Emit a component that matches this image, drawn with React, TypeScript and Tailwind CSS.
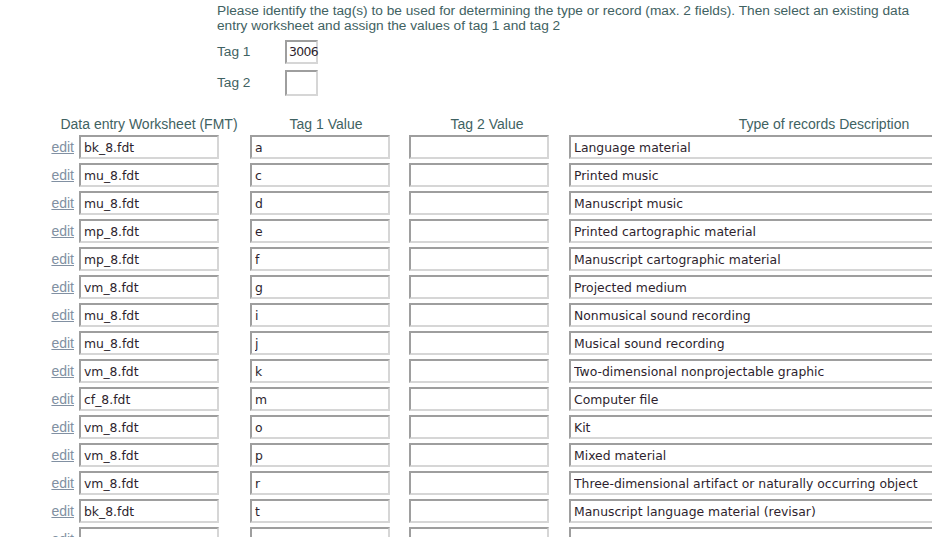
import React from "react";

const rows = [
  { fmt: "bk_8.fdt", tag1: "a", desc: "Language material" },
  { fmt: "mu_8.fdt", tag1: "c", desc: "Printed music" },
  { fmt: "mu_8.fdt", tag1: "d", desc: "Manuscript music" },
  { fmt: "mp_8.fdt", tag1: "e", desc: "Printed cartographic material" },
  { fmt: "mp_8.fdt", tag1: "f", desc: "Manuscript cartographic material" },
  { fmt: "vm_8.fdt", tag1: "g", desc: "Projected medium" },
  { fmt: "mu_8.fdt", tag1: "i", desc: "Nonmusical sound recording" },
  { fmt: "mu_8.fdt", tag1: "j", desc: "Musical sound recording" },
  { fmt: "vm_8.fdt", tag1: "k", desc: "Two-dimensional nonprojectable graphic" },
  { fmt: "cf_8.fdt", tag1: "m", desc: "Computer file" },
  { fmt: "vm_8.fdt", tag1: "o", desc: "Kit" },
  { fmt: "vm_8.fdt", tag1: "p", desc: "Mixed material" },
  { fmt: "vm_8.fdt", tag1: "r", desc: "Three-dimensional artifact or naturally occurring object" },
  { fmt: "bk_8.fdt", tag1: "t", desc: "Manuscript language material (revisar)" },
  { fmt: "", tag1: "", desc: "" },
];

const boxCls =
  "h-[24px] border-2 border-t-[#9e9e9e] border-l-[#9e9e9e] border-b-[#d6d6d6] border-r-[#d6d6d6] bg-white text-[12.4px] text-[#2e1f2e] outline-none [font-family:'DejaVu_Sans',Tahoma,sans-serif]";

const Box = ({ value, width }: { value: string; width: string }) => (
  <input readOnly defaultValue={value} className={`${boxCls} px-[3px] ${width}`} />
);

const Head = ({ text, width }: { text: string; width: string }) => (
  <div className={`${width} flex justify-center`}>
    <span className="whitespace-nowrap">{text}</span>
  </div>
);

export default function App() {
  return (
    <div className="w-[932px] h-[537px] overflow-hidden bg-white [font-family:'Liberation_Sans',Arial,sans-serif]">
      {/* intro */}
      <div className="pl-[217px] pt-[3px] pr-[4px]">
        <p className="text-[13.7px] leading-[15px] text-[#3f6262]">
          Please identify the tag(s) to be used for determining the type or record (max. 2 fields). Then select an existing data
          entry worksheet and assign the values of tag 1 and tag 2
        </p>
        <div className="mt-[7px] flex items-center h-[24px]">
          <span className="w-[68px] text-[13.7px] text-[#3f6262]">Tag 1</span>
          <div className={`${boxCls} w-[33px] pl-[2px] flex items-center text-[11px] tracking-[-0.6px] whitespace-nowrap`}>
            3006
          </div>
        </div>
        <div className="mt-[6px] flex items-center h-[26px]">
          <span className="w-[68px] text-[13.7px] text-[#3f6262]">Tag 2</span>
          <input readOnly className={`${boxCls} w-[33px] h-[26px]`} />
        </div>
      </div>

      {/* table */}
      <div className="mt-[19px]">
        <div className="flex h-[18px] items-center text-[14px] text-[#3f6262]">
          <div className="w-[79px] shrink-0" />
          <div className="w-[171px] shrink-0">
            <Head text="Data entry Worksheet (FMT)" width="w-[140px]" />
          </div>
          <div className="w-[159px] shrink-0">
            <Head text="Tag 1 Value" width="w-[152px]" />
          </div>
          <div className="w-[160px] shrink-0">
            <Head text="Tag 2 Value" width="w-[156px]" />
          </div>
          <Head text="Type of records Description" width="w-[510px] shrink-0" />
        </div>

        {rows.map((r, i) => (
          <div key={i} className="flex h-[28px] items-center">
            <div className="w-[79px] shrink-0 pr-[5px] text-right">
              <a href="#" className="text-[14px] text-[#8190a2] underline">
                edit
              </a>
            </div>
            <div className="w-[171px] shrink-0">
              <Box value={r.fmt} width="w-[140px]" />
            </div>
            <div className="w-[159px] shrink-0">
              <Box value={r.tag1} width="w-[140px]" />
            </div>
            <div className="w-[160px] shrink-0">
              <Box value="" width="w-[140px]" />
            </div>
            <div className="w-[510px] shrink-0">
              <Box value={r.desc} width="w-[510px]" />
            </div>
          </div>
        ))}
      </div>
    </div>
  );
}
